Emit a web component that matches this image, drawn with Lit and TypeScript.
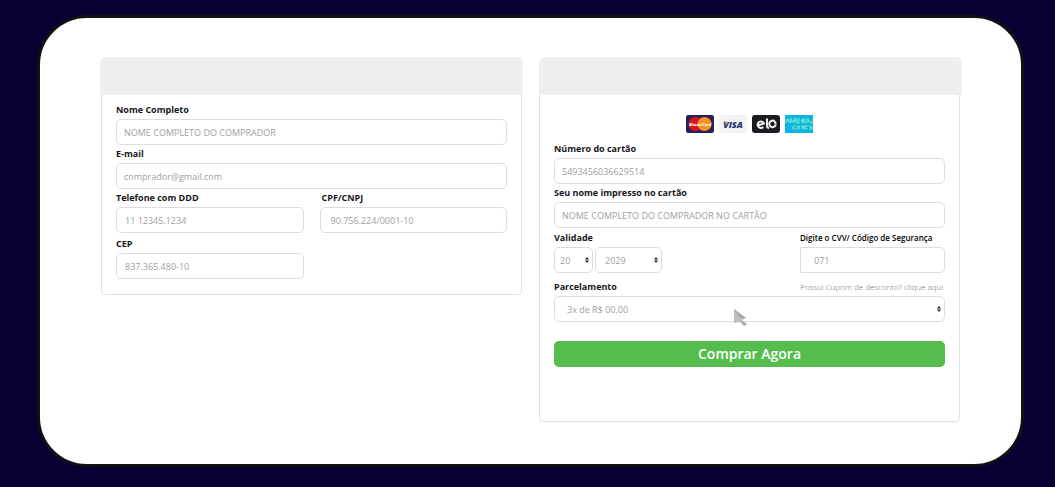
import { LitElement, html, css } from "lit";
import { customElement, property } from "lit/decorators.js";

const base = css`
  * {
    box-sizing: border-box;
  }
  label {
    display: block;
    font-size: 9px;
    line-height: 18px;
    font-weight: 700;
    color: #16161a;
    white-space: nowrap;
  }
  input,
  select {
    display: block;
    width: 100%;
    height: 26px;
    margin: 0;
    border: 1px solid #dcdce2;
    border-radius: 5px;
    background: #fff;
    color: #a0a0a4;
    font: 9px "Open Sans", "Noto Sans", sans-serif;
    outline: none;
  }
  input {
    padding: 0 7px;
  }
  input::placeholder {
    color: #a0a0a4;
    opacity: 1;
  }
`;

@customElement("select-box")
class SelectBox extends LitElement {
  @property() name = "";
  @property() label = "";
  @property({ type: Array }) options: string[] = [];

  static styles = [
    base,
    css`
      :host {
        display: block;
        position: relative;
      }
      select {
        appearance: none;
        padding: 0 var(--indent, 5px);
      }
      .arrows {
        position: absolute;
        right: 4px;
        top: 10px;
        width: 4px;
        height: 6px;
        pointer-events: none;
      }
    `,
  ];

  render() {
    return html`
      <select name=${this.name} aria-label=${this.label}>
        ${this.options.map((o) => html`<option>${o}</option>`)}
      </select>
      <svg class="arrows" viewBox="0 0 4 6" aria-hidden="true">
        <path d="M2 0L4 2.600H0zM2 6L0 3.400h4z" fill="#222228" />
      </svg>
    `;
  }
}

@customElement("app-root")
class AppRoot extends LitElement {
  static styles = [
    base,
    css`
      :host {
        display: block;
        min-height: 100vh;
        box-sizing: border-box;
        padding: 15px 31px 20px 37px;
        background: #080032;
        font-family: "Open Sans", "Noto Sans", sans-serif;
      }
      .frame {
        border: 3px solid #111114;
        border-radius: 50px;
        background: #fff;
        padding: 39px 59px 42px 60px;
      }
      form {
        display: grid;
        grid-template-columns: 1fr 1fr;
        gap: 16px;
        align-items: start;
      }
      .head {
        height: 38px;
        background: #eeeff0;
        border-radius: 6px 6px 0 0;
      }
      .body {
        border: 1px solid #e0e1e4;
        border-top: 0;
        border-radius: 0 0 5px 5px;
        padding: 6px 14px 15px;
        margin: 0 1px;
      }
      .pay .body {
        position: relative;
        margin: 0 2px 0 0;
        padding: 20px 14px 54px;
      }
      .pair {
        display: grid;
        grid-template-columns: 1fr 1fr;
        gap: 2px 16px;
      }
      .pair input {
        padding-left: 8px;
      }
      .pair .cpf {
        padding-left: 10px;
      }
      .pair .cpf-label {
        padding-left: 2px;
      }
      .flags {
        display: flex;
        justify-content: center;
        gap: 5px;
        height: 18px;
        margin-bottom: 7px;
      }
      .flags svg {
        width: 28px;
        height: 18px;
      }
      .dates {
        display: grid;
        grid-template-columns: 39px 67px 1fr 145px;
        column-gap: 2px;
        margin: 1px 0 5px;
      }
      .dates label {
        grid-column: span 3;
      }
      .dates .small {
        grid-column: 4;
        font-size: 8px;
        font-weight: 600;
        color: #000;
      }
      .dates input {
        grid-column: 4;
        border-radius: 0 5px 5px 0;
        padding-left: 13px;
      }
      .year {
        --indent: 9px;
      }
      .plan {
        --indent: 12px;
      }
      .line {
        display: flex;
        justify-content: space-between;
      }
      a {
        padding-right: 2px;
        font-size: 8px;
        line-height: 18px;
        font-weight: 300;
        color: #707078;
        text-decoration: none;
      }
      button {
        display: block;
        width: 100%;
        height: 26px;
        margin-top: 19px;
        padding: 0;
        border: 0;
        border-radius: 5px;
        background: #55bd4d;
        color: #fff;
        font: 600 14px/26px "Open Sans", "Noto Sans", sans-serif;
      }
      .pointer {
        position: absolute;
        left: 46%;
        top: 214px;
        width: 16px;
        height: 18px;
      }
    `,
  ];

  flags() {
    return html`<div class="flags">
      <svg viewBox="0 0 28 18" role="img" aria-label="MasterCard">
        <rect width="28" height="18" rx="2" fill="#27235a" />
        <circle cx="9.5" cy="9" r="7" fill="#d8141c" />
        <circle cx="18.5" cy="9" r="7" fill="#f79226" />
        <text x="14" y="11" text-anchor="middle" font-size="4" font-weight="700" font-style="italic" fill="#fff" font-family="Open Sans">MasterCard</text>
      </svg>
      <svg viewBox="0 0 28 18" role="img" aria-label="Visa">
        <rect width="28" height="18" rx="2" fill="#f3f4f7" />
        <text x="14" y="12.5" text-anchor="middle" font-size="9" font-weight="800" font-style="italic" fill="#29356e" font-family="Open Sans">VISA</text>
        <path d="M4 6h3l1.5 3z" fill="#e9a63a" />
      </svg>
      <svg viewBox="0 0 28 18" role="img" aria-label="Elo">
        <rect width="28" height="18" rx="3" fill="#1b1b22" />
        <g fill="none" stroke="#f2f2f4" stroke-width="2">
          <path d="M6 10.5L12 8.5A3.3 3.3 0 1 0 11.3 12" />
          <path d="M15 3.5V11q0 1.8 2 2" />
          <path d="M22.5 6.2A3.3 3.3 0 1 0 23.8 9.5M22 6Q23.5 7 23.8 9" />
        </g>
      </svg>
      <svg viewBox="0 0 28 18" role="img" aria-label="American Express">
        <rect width="28" height="18" fill="#08b5e5" />
        <g fill="none" stroke="#6fe6c4" stroke-width="1.2">
          <path d="M0 5h4M1 8l2-4 2 4M6 8V4l2 3 2-3v4M15 4h-3v4h3M12 6h3M17 8V4h2v2h-2l3 2M21 4v4M23 8V4l3 4h2V4" />
          <path d="M8 11h3M8 14h3M8 11v3M12 11l3 3M15 11l-3 3M17 14v-3h2v2h-2M23 11h-3v3h3M27 11h-2v1.500h2V14h-3" />
        </g>
      </svg>
    </div>`;
  }

  render() {
    return html`
      <div class="frame">
        <form @submit=${(e: Event) => e.preventDefault()}>
          <section>
            <div class="head"></div>
            <div class="body">
              <label for="nome">Nome Completo</label>
              <input id="nome" placeholder="NOME COMPLETO DO COMPRADOR" />
              <label for="email">E-mail</label>
              <input id="email" type="email" placeholder="comprador@gmail.com" />
              <div class="pair">
                <div>
                  <label for="tel">Telefone com DDD</label>
                  <input id="tel" type="tel" placeholder="11 12345.1234" />
                </div>
                <div>
                  <label for="cpf" class="cpf-label">CPF/CNPJ</label>
                  <input id="cpf" class="cpf" placeholder="90.756.224/0001-10" />
                </div>
                <div>
                  <label for="cep">CEP</label>
                  <input id="cep" placeholder="837.365.480-10" />
                </div>
              </div>
            </div>
          </section>
          <section class="pay">
            <div class="head"></div>
            <div class="body">
              ${this.flags()}
              <label for="numero">Número do cartão</label>
              <input id="numero" placeholder="5493456036629514" />
              <label for="titular">Seu nome impresso no cartão</label>
              <input id="titular" placeholder="NOME COMPLETO DO COMPRADOR NO CARTÃO" />
              <div class="dates">
                <label for="mes">Validade</label>
                <label for="cvv" class="small">Digite o CVV/ Código de Segurança</label>
                <select-box id="mes" name="mes" label="Validade, mês" .options=${["20"]}></select-box>
                <select-box class="year" name="ano" label="Validade, ano" .options=${["2029"]}></select-box>
                <input id="cvv" placeholder="071" />
              </div>
              <div class="line">
                <label for="plano">Parcelamento</label>
                <a href="#">Possui Cupom de desconto? clique aqui</a>
              </div>
              <select-box id="plano" class="plan" name="plano" label="Parcelamento" .options=${["3x de R$ 00,00"]}></select-box>
              <button type="submit">Comprar Agora</button>
              <svg class="pointer" viewBox="0 0 16 18" aria-hidden="true">
                <path d="M1 0L13 9 9 11 14 15 11 17 7 13 1 14z" fill="#bcbcc0" />
                <path d="M1 0L13 9H7zM8 12l6 3-3 2z" fill="#96969c" opacity=".6" />
              </svg>
            </div>
          </section>
        </form>
      </div>
    `;
  }
}
